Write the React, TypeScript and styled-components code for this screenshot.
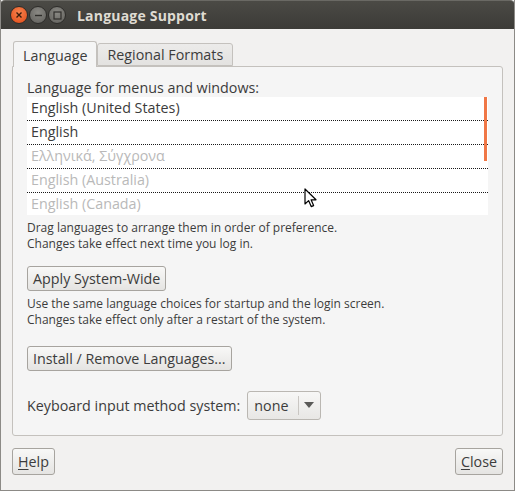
import styled, { createGlobalStyle } from "styled-components";

const Global = createGlobalStyle`
  html, body {
    margin: 0;
    padding: 0;
    background: #f2f1f0;
  }
  body {
    font-family: "Open Sans", "DejaVu Sans", sans-serif;
  }
`;

const languages = [
  { name: "English (United States)", active: true },
  { name: "English", active: true },
  { name: "Ελληνικά, Σύγχρονα", active: false },
  { name: "English (Australia)", active: false },
  { name: "English (Canada)", active: false },
];

export default function App() {
  return (
    <>
      <Global />
      <Window>
        <TitleBar>
          <WindowButtons>
            <CircleButton kind="close">
              <svg width="8" height="8" viewBox="0 0 8 8">
                <path d="M1.5 1.5 L6.5 6.5 M6.5 1.5 L1.5 6.5" stroke="#3a1c0c" strokeWidth="1.4" />
              </svg>
            </CircleButton>
            <CircleButton kind="min">
              <svg width="9" height="9" viewBox="0 0 9 9">
                <path d="M1 4.5 H8" stroke="#2f2e2b" strokeWidth="1.4" />
              </svg>
            </CircleButton>
            <CircleButton kind="max">
              <svg width="9" height="9" viewBox="0 0 9 9">
                <rect x="1" y="1" width="7" height="7" fill="none" stroke="#2f2e2b" strokeWidth="1.2" />
              </svg>
            </CircleButton>
          </WindowButtons>
          <Title>Language Support</Title>
        </TitleBar>

        <Body>
          <TabRow>
            <Tab active>Language</Tab>
            <Tab>Regional Formats</Tab>
          </TabRow>

          <Panel>
            <Label>Language for menus and windows:</Label>
            <ListBox>
              {languages.map((l, i) => (
                <ListRow key={l.name} active={l.active} last={i === languages.length - 1}>
                  {l.name}
                </ListRow>
              ))}
              <ScrollMark />
              <Cursor width="16" height="22" viewBox="0 0 16 22">
                <path
                  d="M1 1 L1 16 L4.6 12.6 L7.2 18.6 L9.6 17.6 L7.1 11.8 L12 11.8 Z"
                  fill="#ffffff"
                  stroke="#000000"
                  strokeWidth="1.2"
                  strokeLinejoin="round"
                />
              </Cursor>
            </ListBox>

            <Note>
              Drag languages to arrange them in order of preference.
              <br />
              Changes take effect next time you log in.
            </Note>

            <Button gap={14}>Apply System-Wide</Button>

            <Note>
              Use the same language choices for startup and the login screen.
              <br />
              Changes take effect only after a restart of the system.
            </Note>

            <Button gap={18}>Install / Remove Languages...</Button>

            <InputRow>
              <Label as="span">Keyboard input method system:</Label>
              <Combo>
                <ComboValue>none</ComboValue>
                <ComboArrow>
                  <svg width="10" height="7" viewBox="0 0 10 7">
                    <path d="M0 0 H10 L5 6 Z" fill="#5a5a58" />
                  </svg>
                </ComboArrow>
              </Combo>
            </InputRow>
          </Panel>

          <Footer>
            <Button gap={0} tall>
              <u>H</u>elp
            </Button>
            <Button gap={0} tall>
              <u>C</u>lose
            </Button>
          </Footer>
        </Body>
      </Window>
    </>
  );
}

const Window = styled.div`
  width: 515px;
  height: 491px;
  box-sizing: border-box;
  border-left: 1px solid #8c8a86;
  border-right: 1px solid #8c8a86;
  border-bottom: 1px solid #8c8a86;
  background: #f2f1f0;
  display: flex;
  flex-direction: column;
  overflow: hidden;
`;

const TitleBar = styled.div`
  height: 29px;
  flex: none;
  display: flex;
  align-items: center;
  margin: 0 -1px;
  border-radius: 5px 5px 0 0;
  border-top: 1px solid #6a6964;
  box-sizing: border-box;
  background: linear-gradient(#4b4a45, #3c3b37);
`;

const WindowButtons = styled.div`
  display: flex;
  gap: 1px;
  padding-left: 10px;
  align-items: center;
`;

const CircleButton = styled.div<{ kind: "close" | "min" | "max" }>`
  width: 18px;
  height: 18px;
  border-radius: 50%;
  display: flex;
  align-items: center;
  justify-content: center;
  box-sizing: border-box;
  border: 1px solid #2e2d2a;
  background: ${(p) =>
    p.kind === "close"
      ? "radial-gradient(circle at 50% 35%, #f7834e, #e14a17)"
      : "radial-gradient(circle at 50% 35%, #8a8984, #5f5e5a)"};
`;

const Title = styled.div`
  margin-left: 11px;
  color: #dfdbd2;
  font-weight: bold;
  font-size: 14px;
  letter-spacing: 0.2px;
`;

const Body = styled.div`
  flex: 1;
  display: flex;
  flex-direction: column;
  padding: 11px 11px 0 11px;
`;

const TabRow = styled.div`
  display: flex;
  align-items: flex-end;
  padding-left: 1px;
  height: 26px;
  position: relative;
  z-index: 1;
`;

const Tab = styled.div<{ active?: boolean }>`
  box-sizing: border-box;
  height: ${(p) => (p.active ? "26px" : "23px")};
  padding: 0 9px;
  padding-top: ${(p) => (p.active ? "1px" : "0")};
  margin-bottom: ${(p) => (p.active ? "-1px" : "0")};
  display: flex;
  align-items: center;
  font-size: 14.3px;
  color: #3c3c3c;
  border: 1px solid #c4c1bd;
  border-bottom: ${(p) => (p.active ? "none" : "1px solid #c4c1bd")};
  border-radius: 3px 3px 0 0;
  background: ${(p) => (p.active ? "#f5f5f5" : "linear-gradient(#ecebea, #e3e2e0)")};
`;

const Panel = styled.div`
  box-sizing: border-box;
  height: 370px;
  display: flex;
  flex-direction: column;
  border: 1px solid #c4c1bd;
  border-radius: 0 3px 3px 3px;
  background: #f5f5f5;
  padding: 12px 13px 0 14px;
  color: #3c3c3c;
`;

const Label = styled.div`
  font-size: 14.3px;
  color: #3c3c3c;
  line-height: 17px;
`;

const ListBox = styled.div`
  position: relative;
  margin-top: 1px;
  width: 461px;
  background: #ffffff;
  display: flex;
  flex-direction: column;
`;

const ListRow = styled.div<{ active: boolean; last: boolean }>`
  height: ${(p) => (p.last ? "22px" : "24px")};
  box-sizing: border-box;
  padding: 0 4px;
  line-height: 22px;
  font-size: 14.3px;
  color: ${(p) => (p.active ? "#3c3c3c" : "#b9b9b9")};
  border-bottom: ${(p) => (p.last ? "none" : "1px dotted #1a1a1a")};
`;

const ScrollMark = styled.div`
  position: absolute;
  right: 1px;
  top: 0;
  width: 3px;
  height: 64px;
  background: #f07746;
`;

const Cursor = styled.svg`
  position: absolute;
  left: 277px;
  top: 91px;
`;

const Note = styled.div`
  margin-top: 5px;
  font-size: 12px;
  line-height: 16px;
  color: #3c3c3c;
`;

const Button = styled.div<{ gap: number; tall?: boolean }>`
  align-self: flex-start;
  display: flex;
  align-items: center;
  box-sizing: border-box;
  height: ${(p) => (p.tall ? "27px" : "25px")};
  padding: 0 5px;
  margin-top: ${(p) => p.gap}px;
  border: 1px solid #a7a49f;
  border-radius: 3px;
  background: linear-gradient(#f8f8f7, #e5e4e2);
  font-size: 14.3px;
  color: #3c3c3c;
  u {
    text-decoration-thickness: 1px;
    text-underline-offset: 2px;
  }
`;

const InputRow = styled.div`
  display: flex;
  align-items: center;
  gap: 7px;
  margin-top: 20px;
`;

const Combo = styled.div`
  display: flex;
  align-items: center;
  box-sizing: border-box;
  height: 29px;
  width: 74px;
  border: 1px solid #bab7b2;
  border-radius: 3px;
  background: linear-gradient(#f7f7f6, #e8e7e5);
`;

const ComboValue = styled.div`
  flex: 1;
  padding-left: 6px;
  font-size: 14.3px;
  color: #3c3c3c;
`;

const ComboArrow = styled.div`
  width: 20px;
  height: 19px;
  display: flex;
  align-items: center;
  justify-content: center;
  border-left: 1px solid #c9c6c2;
  margin-right: 1px;
`;

const Footer = styled.div`
  display: flex;
  justify-content: space-between;
  margin-top: 12px;
`;
